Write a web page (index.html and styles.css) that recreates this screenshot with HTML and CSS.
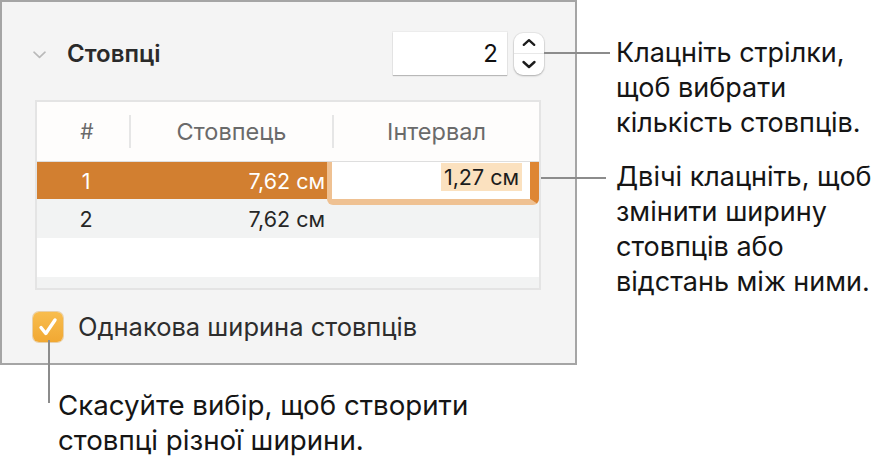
FILE: index.html
```html
<!DOCTYPE html>
<html lang="uk">
<head>
    <meta charset="UTF-8">
    <meta name="viewport" content="width=device-width, initial-scale=1.0">
    <title>Стовпці</title>
    <link rel="stylesheet" href="styles.css">
</head>
<body>
    <div class="page">
        <div class="top">
            <section class="panel">
                <div class="panel-head">
                    <div class="title">
                        <svg class="disclosure" width="13" height="8" viewBox="0 0 13 8"><polyline points="1,1.2 6.5,6.4 12,1.2" fill="none" stroke="#b9b9b9" stroke-width="1.6" stroke-linecap="round" stroke-linejoin="round"/></svg>
                        <span>Стовпці</span>
                    </div>
                    <div class="count">
                        <div class="count-field">2</div>
                        <div class="stepper">
                            <svg width="30" height="21" viewBox="0 0 30 21"><polyline points="9.5,12.5 15,7.5 20.5,12.5" fill="none" stroke="#1c1c1c" stroke-width="2.4" stroke-linecap="round" stroke-linejoin="round"/></svg>
                            <svg width="30" height="21" viewBox="0 0 30 21"><polyline points="9.5,8 15,13 20.5,8" fill="none" stroke="#1c1c1c" stroke-width="2.4" stroke-linecap="round" stroke-linejoin="round"/></svg>
                        </div>
                    </div>
                </div>

                <div class="cols-table">
                    <div class="row head">
                        <div class="c-num"><span>#</span></div>
                        <div class="c-width"><span>Стовпець</span></div>
                        <div class="c-gap"><span>Інтервал</span></div>
                    </div>
                    <div class="row selected">
                        <div class="c-num">1</div>
                        <div class="c-width">7,62 см</div>
                        <div class="c-gap">
                            <div class="edit"><span class="sel">1,27 см</span></div>
                        </div>
                    </div>
                    <div class="row alt">
                        <div class="c-num">2</div>
                        <div class="c-width">7,62 см</div>
                        <div class="c-gap"></div>
                    </div>
                    <div class="row empty"></div>
                    <div class="row alt stub"></div>
                </div>

                <label class="equal">
                    <span class="check">
                        <svg width="30" height="30" viewBox="0 0 30 30"><polyline points="8,15.5 12.8,21.5 22,8" fill="none" stroke="#fff" stroke-width="3.4" stroke-linecap="round" stroke-linejoin="round"/></svg>
                    </span>
                    Однакова ширина стовпців
                </label>
            </section>

            <div class="notes">
                <p class="note">Клацніть стрілки,<br>щоб вибрати<br>кількість стовпців.</p>
                <p class="note">Двічі клацніть, щоб<br>змінити ширину<br>стовпців або<br>відстань між ними.</p>
            </div>
        </div>

        <p class="note note-bottom">Скасуйте вибір, щоб створити<br>стовпці різної ширини.</p>

        <!-- callout leaders -->
        <div class="leader leader-arrows"></div>
        <div class="leader leader-edit"></div>
        <div class="leader leader-check"></div>
    </div>
</body>
</html>
```

FILE: styles.css
```css
body {
    margin: 0;
    background-color: #fff;
    font-family: Inter, "Noto Sans", sans-serif;
    color: #161616;
}
.page {
    position: relative;
    width: 894px;
    height: 467px;
    overflow: hidden;
}
.top {
    display: flex;
    align-items: flex-start;
}
.panel {
    width: 573px;
    height: 361px;
    border: 2px solid #a5a5a5;
    background-color: #f4f4f4;
    display: flex;
    flex-direction: column;
}
.panel-head {
    display: flex;
    align-items: center;
    justify-content: space-between;
    height: 43px;
    margin-top: 30px;
    padding: 0 31px;
}
.title {
    display: flex;
    align-items: center;
    gap: 21px;
    font-size: 24px;
    font-weight: 600;
    color: #2a2a2a;
}
.disclosure {
    margin-top: 2px;
}
.count {
    display: flex;
    align-items: center;
    gap: 7px;
}
.count-field {
    width: 114px;
    height: 43px;
    box-sizing: border-box;
    padding-right: 9px;
    background-color: #fff;
    box-shadow: 0 1px 1px rgba(0, 0, 0, 0.22), 0 0 0 1px rgba(0, 0, 0, 0.03);
    font-size: 24px;
    line-height: 43px;
    text-align: right;
    color: #111;
}
.stepper {
    width: 30px;
    height: 42px;
    display: flex;
    flex-direction: column;
    background-color: #fff;
    border-radius: 9px;
    box-shadow: 0 0 0 1px rgba(0, 0, 0, 0.05), 0 1px 2px rgba(0, 0, 0, 0.25);
}
.stepper svg:first-child {
    border-bottom: 1px solid #e8e8e8;
    height: 20px;
}
.cols-table {
    width: 506px;
    height: 190px;
    box-sizing: border-box;
    margin: 25px 0 0 33px;
    border: 2px solid #e4e4e4;
    background-color: #fff;
    overflow: hidden;
}
.row {
    display: grid;
    grid-template-columns: 92px 203px 1fr;
    align-items: center;
    height: 38px;
    font-size: 21.5px;
    color: #262626;
}
.row .c-num {
    text-align: center;
    padding-left: 6px;
}
.row .c-width {
    text-align: right;
    padding-right: 7px;
}
.row.head {
    height: 59px;
    border-bottom: 1px solid #dedede;
    background-color: #fefdfc;
    font-size: 23.5px;
    color: #6a6a6a;
}
.row.head > div {
    height: 33px;
    line-height: 33px;
    text-align: center;
    padding: 0;
}
.row.head .c-num {
    padding-left: 8px;
    font-size: 21px;
}
.row.head .c-width,
.row.head .c-gap {
    border-left: 2px solid #e6e6e6;
}
.row.selected {
    height: 37px;
    background-color: #d27f30;
    color: #fff;
}
.row.selected .c-gap {
    position: relative;
    height: 100%;
}
.edit {
    position: absolute;
    top: 0;
    left: -5px;
    right: 0;
    bottom: -6px;
    box-sizing: border-box;
    padding-right: 8px;
    background-color: #fff;
    border-style: solid;
    border-color: #efc192;
    border-width: 0 9px 6px 5px;
    border-right-color: #de8633;
    border-radius: 0 0 6px 6px;
    display: flex;
    align-items: flex-start;
    justify-content: flex-end;
}
.sel {
    margin-top: 1px;
    padding: 0 3px;
    line-height: 28px;
    background-color: #fbe1bf;
    color: #1c1c1c;
}
.row.alt {
    height: 39px;
    background-color: #f2f3f3;
}
.row.empty {
    height: 39px;
}
.row.stub {
    height: 20px;
}
.equal {
    display: flex;
    align-items: center;
    gap: 15px;
    margin: 21px 0 0 31px;
    font-size: 25.5px;
    color: #2d2d2d;
}
.check {
    width: 30px;
    height: 30px;
    border-radius: 6px;
    background: linear-gradient(#f8bd4e, #f1a833);
    box-shadow: 0 0 0 1px rgba(210, 140, 30, 0.35);
}
.check svg {
    display: block;
}
.notes {
    margin-left: 39px;
    padding-top: 35px;
}
.note {
    margin: 0;
    font-size: 27px;
    line-height: 35px;
    color: #151515;
}
.notes .note + .note {
    margin-top: 19px;
}
.note-bottom {
    margin: 23px 0 0 58px;
    font-size: 27.7px;
}
.leader {
    position: absolute;
    background-color: #8c8c8c;
}
.leader-arrows {
    left: 544px;
    top: 52px;
    width: 66px;
    height: 2px;
}
.leader-edit {
    left: 541px;
    top: 177px;
    width: 65px;
    height: 2px;
}
.leader-check {
    left: 48px;
    top: 340px;
    width: 2px;
    height: 63px;
}
```
